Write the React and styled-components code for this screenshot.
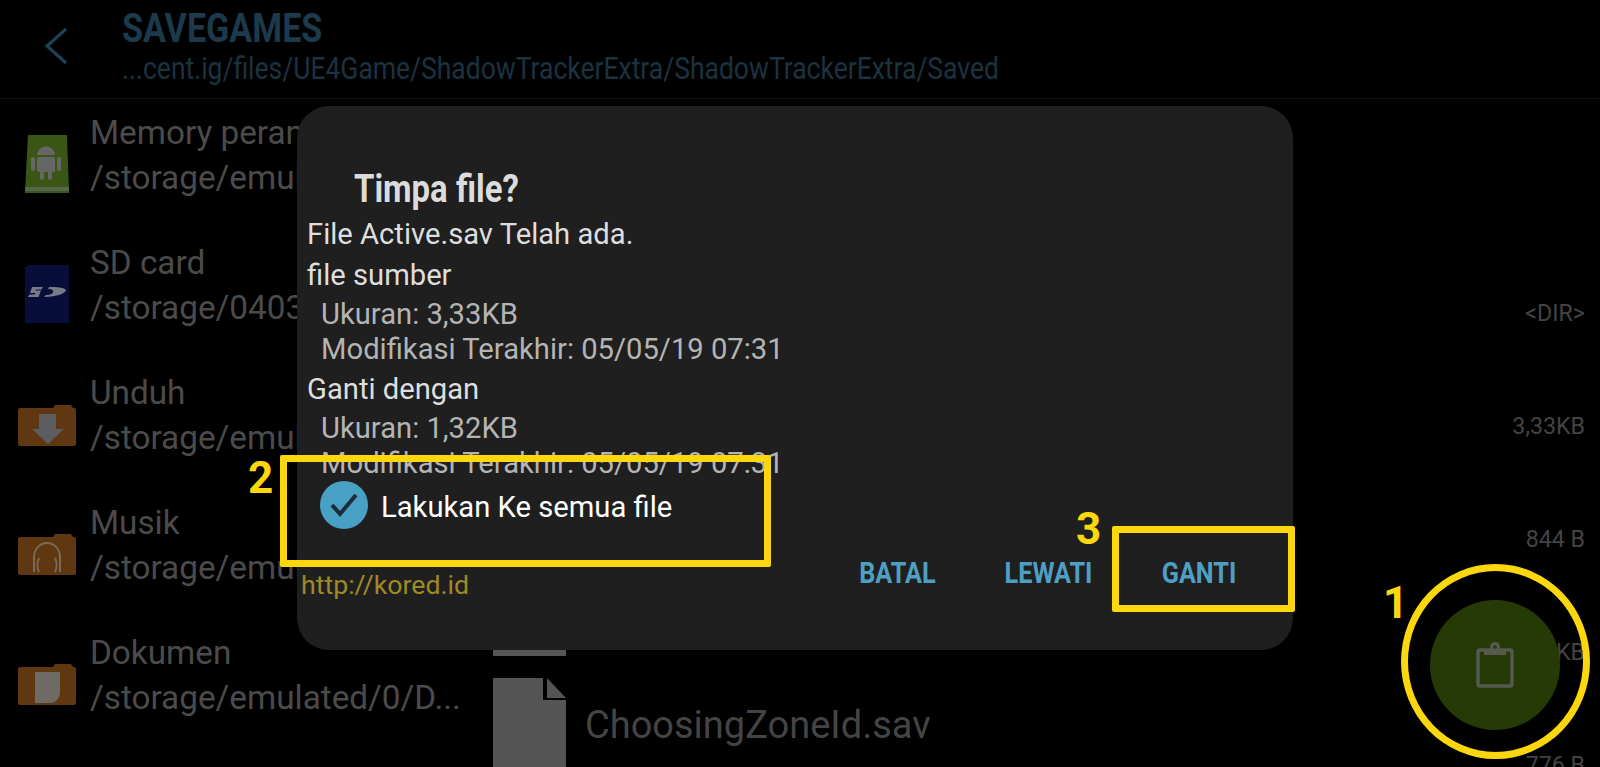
import React from 'react'
import styled, { createGlobalStyle } from 'styled-components'

const GlobalStyle = createGlobalStyle`
  html, body {
    margin: 0;
    padding: 0;
    width: 100%;
    height: 100%;
    overflow: hidden;
    background: #000;
    font-family: Roboto, "Liberation Sans", sans-serif;
  }
`

const Screen = styled.div`
  position: relative;
  width: 1600px;
  height: 767px;
  overflow: hidden;
  background: #000;
`

const Header = styled.header`
  display: flex;
  align-items: flex-start;
  height: 98px;
  border-bottom: 1px solid #141414;
  box-sizing: content-box;
`

const BackButton = styled.div`
  display: flex;
  width: 122px;
  padding: 27px 0 0 44px;
  box-sizing: border-box;
`

const HeaderText = styled.div`
  display: flex;
  flex-direction: column;
`

const FolderTitle = styled.div`
  font-size: 40px;
  line-height: 44px;
  margin-top: 7px;
  font-weight: 700;
  color: #1c3a4c;
  white-space: nowrap;
  transform: scaleX(0.853);
  transform-origin: left center;
`

const FolderPath = styled.div`
  font-size: 32px;
  line-height: 30px;
  margin-top: 2px;
  color: #1b3240;
  white-space: nowrap;
  transform: scaleX(0.828);
  transform-origin: left center;
`

const Body = styled.main`
  display: flex;
  height: 668px;
`

const Drawer = styled.nav`
  width: 493px;
  flex-shrink: 0;
  padding-top: 11px;
`

const DrawerRow = styled.div`
  display: flex;
  height: 130px;
  padding-left: 17px;
  gap: 13px;
`

const DrawerIcon = styled.div`
  display: flex;
  justify-content: center;
  width: 60px;
  margin-top: ${(p) => p.$top}px;
`

const DrawerText = styled.div`
  font-size: 33.3px;
  line-height: 45px;
  color: #4b4b4b;
  white-space: nowrap;
`

const FileList = styled.section`
  flex: 1;
  padding-top: 3px;
`

const FileRow = styled.div`
  position: relative;
  display: flex;
  align-items: flex-start;
  height: 113px;
  padding-top: 11px;
  box-sizing: border-box;
`

const FileName = styled.div`
  margin: 24px 0 0 19px;
  font-size: 38px;
  line-height: 46px;
  color: #444;
  white-space: nowrap;
`

const FileSize = styled.div`
  position: absolute;
  right: 15px;
  top: 85px;
  font-size: 23.2px;
  line-height: 26px;
  color: #444;
`

const Dialog = styled.div`
  position: absolute;
  left: 297px;
  top: 106px;
  width: 996px;
  height: 544px;
  padding: 60px 0 0 10px;
  box-sizing: border-box;
  background: #1f1f1f;
  border-radius: 32px;
`

const DialogTitle = styled.h2`
  margin: 0 0 2px 47px;
  font-size: 38px;
  line-height: 46px;
  font-weight: 700;
  color: #dcdcdc;
  white-space: nowrap;
  transform: scaleX(0.866);
  transform-origin: left center;
`

const InfoLine = styled.div`
  font-size: 29.2px;
  line-height: 41px;
  color: #dedede;
`

const InfoGroup = styled.div`
  padding: 1px 0 0 14px;
  margin-bottom: ${(p) => p.$after}px;
`

const InfoDetail = styled.div`
  font-size: 29.2px;
  line-height: 34.5px;
  color: #b4b4b4;
`

const CheckRow = styled.div`
  display: flex;
  align-items: center;
  gap: 13px;
  height: 48px;
  margin-left: 13px;
  font-size: 29.2px;
  color: #fff;
`

const CheckLabel = styled.span`
  padding-top: 4px;
`

const CheckCircle = styled.div`
  display: flex;
  align-items: center;
  justify-content: center;
  width: 48px;
  height: 48px;
  border-radius: 50%;
  background: #48a1c4;
`

const DialogFooter = styled.div`
  display: flex;
  justify-content: space-between;
  margin: 16px 22px 0 -6px;
`

const Watermark = styled.div`
  margin-top: 22px;
  font-size: 26.7px;
  line-height: 36px;
  color: #a08a26;
`

const FooterButtons = styled.div`
  display: flex;
`

const DialogButton = styled.div`
  width: ${(p) => p.$width}px;
  font-size: 29px;
  line-height: 56px;
  font-weight: 700;
  text-align: center;
  color: #4f9fc4;
  transform: scaleX(0.87);
`

const Fab = styled.div`
  position: absolute;
  left: 1430px;
  top: 600px;
  display: flex;
  align-items: center;
  justify-content: center;
  width: 130px;
  height: 130px;
  border-radius: 50%;
  background: #263a06;
`

const HighlightBox = styled.div`
  position: absolute;
  left: ${(p) => p.$left}px;
  top: ${(p) => p.$top}px;
  width: ${(p) => p.$width}px;
  height: ${(p) => p.$height}px;
  box-sizing: border-box;
  border: 7px solid #fdd70e;
  border-radius: ${(p) => (p.$round ? '50%' : '2px')};
`

const StepNumber = styled.div`
  position: absolute;
  left: ${(p) => p.$left}px;
  top: ${(p) => p.$top}px;
  font-size: 44px;
  line-height: 44px;
  font-weight: 700;
  color: #fdd70e;
`

const BackIcon = () => (
  <svg width="24" height="38" viewBox="0 0 24 38">
    <path d="M22 2 L3 19 L22 36" fill="none" stroke="#1c4355" strokeWidth="3.2" />
  </svg>
)

const AndroidCard = () => (
  <svg width="44" height="58" viewBox="0 0 44 58">
    <path d="M3 0H42L44 58H0Z" fill="#3a5615" />
    <rect x="0" y="52" width="44" height="4" fill="#56664a" />
    <path d="M12 20a9 8.500 0 0 1 18 0Z" fill="#666" />
    <rect x="12" y="22" width="18" height="15" rx="2" fill="#666" />
    <rect x="6" y="22" width="4" height="14" rx="2" fill="#666" />
    <rect x="32" y="22" width="4" height="14" rx="2" fill="#666" />
    <rect x="15" y="35" width="4" height="10" rx="2" fill="#666" />
    <rect x="23" y="35" width="4" height="10" rx="2" fill="#666" />
  </svg>
)

const SdCard = () => (
  <svg width="44" height="58" viewBox="0 0 44 58">
    <path d="M3 0H44V58H0V3Z" fill="#070e3a" />
    <path d="M7 22h11l-1.500 2.500H11l-.5 1H16l-2.500 6.500H3l1.500-2.500H10l.5-1.500H5Z" fill="#787b85" />
    <path d="M24 22c7 0 16 .5 17 3 0 3-9 7-22 7l2-2c5 0 8-2 7-4s-3-2-5-2Z" fill="#787b85" />
  </svg>
)

const Folder = ({ children }) => (
  <svg width="58" height="41" viewBox="0 0 58 41">
    <path d="M0 5a2 2 0 0 1 2-2h33l2-3h16l2 3h1a2 2 0 0 1 2 2v34a2 2 0 0 1-2 2H2a2 2 0 0 1-2-2Z" fill="#5f3710" />
    {children}
  </svg>
)

const FileIcon = () => (
  <svg width="73" height="91" viewBox="0 0 73 91">
    <path d="M0 0H50V22H73V91H0Z" fill="#555" />
    <path d="M54 0L73 20H54Z" fill="#555" />
  </svg>
)

const ClipboardIcon = () => (
  <svg width="40" height="46" viewBox="0 0 40 46">
    <rect x="3" y="8" width="34" height="36" rx="2" fill="none" stroke="#555a50" strokeWidth="3.5" />
    <path d="M9 13V7h6.500a5 5 0 1 1 9 0H31v6Z" fill="#555a50" />
    <circle cx="20" cy="5" r="1.800" fill="#263a06" />
  </svg>
)

const drawerItems = [
  { name: 'Memory perangkat', path: '/storage/emulated/0', top: 25, icon: <AndroidCard /> },
  { name: 'SD card', path: '/storage/0403-0C0B', top: 25, icon: <SdCard /> },
  {
    name: 'Unduh',
    path: '/storage/emulated/0/D...',
    top: 35,
    icon: (
      <Folder>
        <path d="M21 9H38V24H46L30 39 14 24H21Z" fill="#5b5d60" />
      </Folder>
    ),
  },
  {
    name: 'Musik',
    path: '/storage/emulated/0/M...',
    top: 34,
    icon: (
      <Folder>
        <path
          d="M16 38V23a13 14 0 0 1 26 0V38M21 24C19 28 19 34 21 38M37 24C39 28 39 34 37 38"
          fill="none"
          stroke="#7a6a58"
          strokeWidth="2"
        />
      </Folder>
    ),
  },
  {
    name: 'Dokumen',
    path: '/storage/emulated/0/D...',
    top: 34,
    icon: (
      <Folder>
        <path d="M17 8H42V28C42 34 38 39 32 39H17Z" fill="#6e6a66" />
      </Folder>
    ),
  },
]

const files = [
  { size: '' },
  { size: '<DIR>' },
  { size: '3,33KB' },
  { size: '844 B' },
  { size: '1,32KB' },
  { name: 'ChoosingZoneId.sav', size: '776 B' },
]

export default function App() {
  return (
    <Screen>
      <GlobalStyle />
      <Header>
        <BackButton>
          <BackIcon />
        </BackButton>
        <HeaderText>
          <FolderTitle>SAVEGAMES</FolderTitle>
          <FolderPath>...cent.ig/files/UE4Game/ShadowTrackerExtra/ShadowTrackerExtra/Saved</FolderPath>
        </HeaderText>
      </Header>
      <Body>
        <Drawer>
          {drawerItems.map((item) => (
            <DrawerRow key={item.name}>
              <DrawerIcon $top={item.top}>{item.icon}</DrawerIcon>
              <DrawerText>
                {item.name}
                <br />
                {item.path}
              </DrawerText>
            </DrawerRow>
          ))}
        </Drawer>
        <FileList>
          {files.map((file, i) => (
            <FileRow key={i}>
              <FileIcon />
              {file.name && <FileName>{file.name}</FileName>}
              <FileSize>{file.size}</FileSize>
            </FileRow>
          ))}
        </FileList>
      </Body>

      <Dialog>
        <DialogTitle>Timpa file?</DialogTitle>
        <InfoLine>File Active.sav Telah ada.</InfoLine>
        <InfoLine>file sumber</InfoLine>
        <InfoGroup $after={3}>
          <InfoDetail>Ukuran: 3,33KB</InfoDetail>
          <InfoDetail>Modifikasi Terakhir: 05/05/19 07:31</InfoDetail>
        </InfoGroup>
        <InfoLine>Ganti dengan</InfoLine>
        <InfoGroup $after={1}>
          <InfoDetail>Ukuran: 1,32KB</InfoDetail>
          <InfoDetail>Modifikasi Terakhir: 05/05/19 07:31</InfoDetail>
        </InfoGroup>
        <CheckRow>
          <CheckCircle>
            <svg width="30" height="26" viewBox="0 0 30 26">
              <path d="M3 13L11 22L27 3" fill="none" stroke="#1d2c38" strokeWidth="4" />
            </svg>
          </CheckCircle>
          <CheckLabel>Lakukan Ke semua file</CheckLabel>
        </CheckRow>
        <DialogFooter>
          <Watermark>http://kored.id</Watermark>
          <FooterButtons>
            <DialogButton $width={145}>BATAL</DialogButton>
            <DialogButton $width={157}>LEWATI</DialogButton>
            <DialogButton $width={144}>GANTI</DialogButton>
          </FooterButtons>
        </DialogFooter>
      </Dialog>

      <Fab>
        <ClipboardIcon />
      </Fab>
      <HighlightBox $round $left={1401} $top={564} $width={189} $height={195} />
      <HighlightBox $left={280} $top={455} $width={491} $height={112} />
      <HighlightBox $left={1112} $top={526} $width={183} $height={86} />
      <StepNumber $left={1383} $top={581}>1</StepNumber>
      <StepNumber $left={248} $top={456}>2</StepNumber>
      <StepNumber $left={1076} $top={507}>3</StepNumber>
    </Screen>
  )
}
